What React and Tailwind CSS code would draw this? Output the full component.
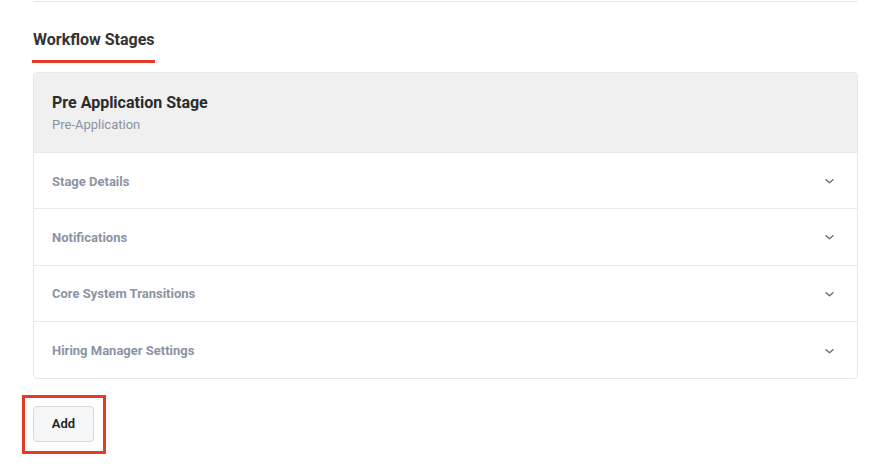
import React from 'react';

const SECTIONS = ['Stage Details', 'Notifications', 'Core System Transitions', 'Hiring Manager Settings'];

function Chevron() {
  return (
    <svg width="9" height="5" viewBox="0 0 9 5" fill="none" className="text-[#5f6b80]">
      <path d="M1 0.8l3.5 3L8 0.8" stroke="currentColor" strokeWidth="1.4" strokeLinecap="round" strokeLinejoin="round" />
    </svg>
  );
}

export default function App() {
  return (
    <div className="w-[891px] h-[467px] bg-white font-['Roboto','Liberation_Sans',sans-serif] overflow-hidden">
      <div className="ml-[33px] w-[825px]">
        <div className="h-px mt-px bg-[#e6e6e6]"></div>

        {/* section title */}
        <div className="mt-[29px] ml-[-1px] inline-block">
          <h2 className="pl-px text-[16px] leading-[18px] font-bold text-[#333333]">Workflow Stages</h2>
          <div className="mt-[11px] h-[3px] w-[123px] bg-[#e23c25]"></div>
        </div>

        {/* stage card */}
        <div className="mt-[9px] rounded-[4px] border border-[#e6e7ea] overflow-hidden">
          <div className="bg-[#f0f0f0] h-[80px] px-[18px] pt-[21px] border-b border-[#e6e7ea]">
            <div className="text-[16px] leading-[18px] font-bold text-[#2b2b2b]">Pre Application Stage</div>
            <div className="mt-[5px] text-[13px] leading-[16px] text-[#8a93a6]">Pre-Application</div>
          </div>
          {SECTIONS.map((s, i) => (
            <div
              key={s}
              className={`h-[56.3px] pt-[2px] px-[18px] flex items-center justify-between ${i < SECTIONS.length - 1 ? 'border-b border-[#e8e9ec]' : ''}`}
            >
              <span className="text-[13px] font-bold text-[#8b93a3]">{s}</span>
              <span className="mr-[5px] flex"><Chevron /></span>
            </div>
          ))}
        </div>
      </div>

      {/* add button, highlighted */}
      <div className="mt-[16px] ml-[22px] w-[84px] h-[59px] border-[3px] border-[#e23c25] pl-[8px] pt-[8px]">
        <button className="w-[61px] h-[36px] rounded-[4px] border border-[#d5d7db] bg-[#f6f7f9] text-[13px] font-semibold text-[#222222]">
          Add
        </button>
      </div>
    </div>
  );
}
